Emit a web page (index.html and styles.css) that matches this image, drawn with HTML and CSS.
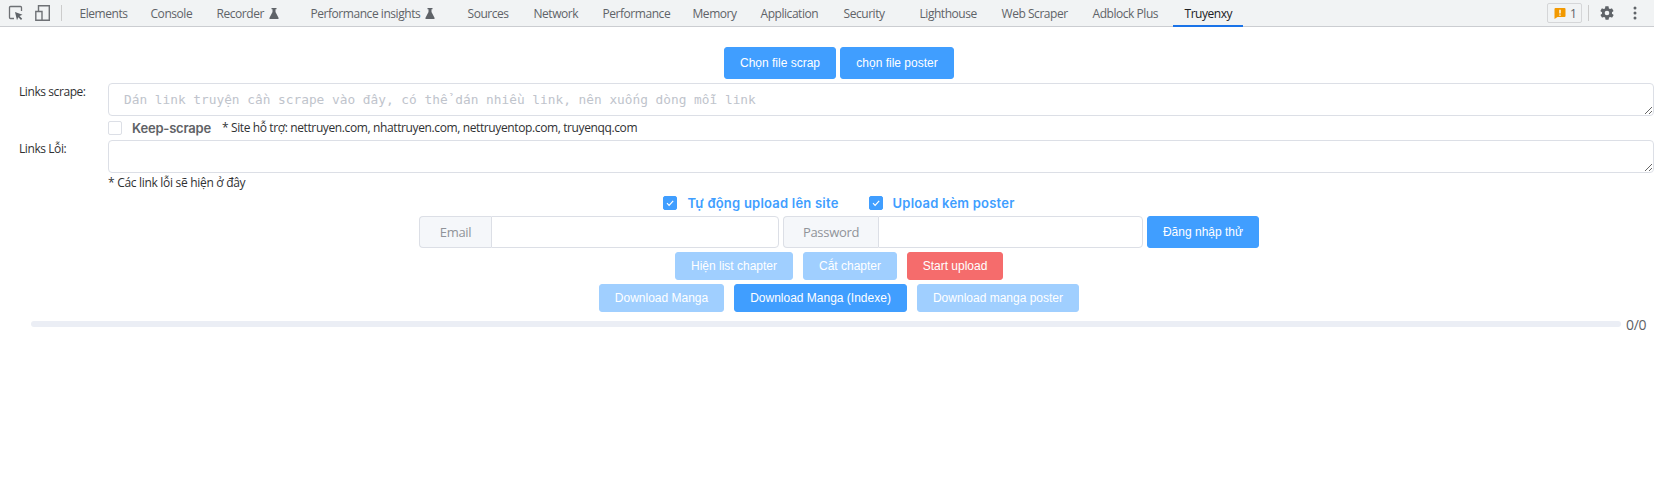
FILE: index.html
```html
<!DOCTYPE html>
<html lang="vi">
<head>
<meta charset="utf-8">
<title>Truyenxy</title>
<link rel="stylesheet" href="styles.css">
</head>
<body>
<header class="toolbar">
  <div class="tool-icons">
    <svg class="tool-icon" width="16" height="16" viewBox="0 0 16 16"><path d="M6 13.500H2.500a1 1 0 0 1-1-1V2.500a1 1 0 0 1 1-1h10a1 1 0 0 1 1 1V6" fill="none" stroke="#6e7175" stroke-width="1.300"/><path d="M7 7l7.500 2.700-3 1.300 2.700 2.800-1.200 1.200-2.700-2.800-1.300 3z" fill="#5f6368"/></svg>
    <svg class="tool-icon device" width="16" height="16" viewBox="0 0 16 16"><path d="M3.500 6V.8h10.800v14.400H7" fill="none" stroke="#6e7175" stroke-width="1.400"/><path d="M.8 6.500h6.200v8.700H.8z" fill="none" stroke="#6e7175" stroke-width="1.400"/></svg>
  </div>
  <span class="divider"></span>
  <nav class="tabs">
    <span class="tab">Elements</span>
    <span class="tab">Console</span>
    <span class="tab">Recorder<svg class="flask" width="10" height="11" viewBox="0 0 10 11"><path d="M2.500 0h5v1.200H6.500v2.800L9.500 9.800V11H.5V9.800L3.500 4V1.200h-1z" fill="#5f6368"/></svg></span>
    <span class="tab">Performance insights<svg class="flask" width="10" height="11" viewBox="0 0 10 11"><path d="M2.500 0h5v1.200H6.500v2.800L9.500 9.800V11H.5V9.800L3.500 4V1.200h-1z" fill="#5f6368"/></svg></span>
    <span class="tab">Sources</span>
    <span class="tab">Network</span>
    <span class="tab">Performance</span>
    <span class="tab">Memory</span>
    <span class="tab">Application</span>
    <span class="tab">Security</span>
    <span class="tab">Lighthouse</span>
    <span class="tab">Web Scraper</span>
    <span class="tab">Adblock Plus</span>
    <span class="tab active">Truyenxy</span>
  </nav>
  <div class="tool-right">
    <span class="issues"><svg width="12" height="12" viewBox="0 0 12 12"><path d="M1.500 1h9a1 1 0 0 1 1 1v7a1 1 0 0 1-1 1H3.500L.5 12V2a1 1 0 0 1 1-1z" fill="#f29900"/><path d="M5.300 2.800h1.400v3.800H5.300zM5.300 7.400h1.400v1.400H5.300z" fill="#fff"/></svg>1</span>
    <span class="divider"></span>
    <svg class="gear" width="16" height="16" viewBox="0 0 24 24"><path fill-rule="evenodd" d="M19.400 13c.1-.3.100-.7.100-1s0-.7-.1-1l2.100-1.600c.2-.2.200-.4.100-.6l-2-3.500c-.1-.2-.4-.3-.6-.2l-2.500 1c-.5-.4-1.100-.7-1.700-1l-.4-2.600c0-.3-.2-.5-.5-.5h-4c-.3 0-.5.200-.5.500l-.4 2.600c-.6.300-1.200.6-1.700 1l-2.500-1c-.2-.1-.5 0-.6.200l-2 3.500c-.1.200-.1.500.1.600L4.600 11c-.1.300-.1.700-.1 1s0 .7.100 1l-2.100 1.600c-.2.200-.2.400-.1.600l2 3.500c.1.200.4.300.6.200l2.500-1c.5.400 1.100.7 1.700 1l.4 2.600c0 .3.200.5.500.5h4c.3 0 .5-.2.500-.5l.4-2.600c.6-.3 1.200-.6 1.700-1l2.500 1c.2.100.5 0 .6-.2l2-3.500c.1-.2.100-.5-.1-.6zM12 15.500a3.500 3.500 0 1 1 0-7 3.500 3.500 0 0 1 0 7z" fill="#5f6368"/></svg>
    <svg class="dots" width="4" height="14" viewBox="0 0 4 14"><circle cx="2" cy="2" r="1.500" fill="#5f6368"/><circle cx="2" cy="7" r="1.500" fill="#5f6368"/><circle cx="2" cy="12" r="1.500" fill="#5f6368"/></svg>
  </div>
</header>

<main class="page">
  <div class="center-row row-files">
    <button class="btn btn-file">Chọn file scrap</button>
    <button class="btn btn-file-2">chọn file poster</button>
  </div>

  <div class="form-row row-scrape">
    <label class="field-label">Links scrape:</label>
    <textarea class="area" placeholder="Dán link truyện cần scrape vào đây, có thể dán nhiều link, nên xuống dòng mỗi link"></textarea>
  </div>
  <div class="note-row">
    <span class="check"></span>
    <span class="keep">Keep-scrape</span>
    <span class="note">* Site hỗ trợ: nettruyen.com, nhattruyen.com, nettruyentop.com, truyenqq.com</span>
  </div>
  <div class="form-row row-error">
    <label class="field-label">Links Lỗi:</label>
    <textarea class="area"></textarea>
  </div>
  <div class="note-row note-below">
    <span class="note">* Các link lỗi sẽ hiện ở đây</span>
  </div>

  <div class="center-row row-checks">
    <span class="check checked"><svg width="10" height="10" viewBox="0 0 10 10"><path d="M2 5.200l2.100 2.100L8.200 2.800" fill="none" stroke="#fff" stroke-width="1.200"/></svg></span>
    <span class="check-label">Tự động upload lên site</span>
    <span class="check checked second"><svg width="10" height="10" viewBox="0 0 10 10"><path d="M2 5.200l2.100 2.100L8.200 2.800" fill="none" stroke="#fff" stroke-width="1.200"/></svg></span>
    <span class="check-label">Upload kèm poster</span>
  </div>

  <div class="center-row row-login">
    <div class="input-group">
      <span class="addon addon-email">Email</span>
      <input class="input" type="text">
    </div>
    <div class="input-group">
      <span class="addon addon-pass">Password</span>
      <input class="input" type="password">
    </div>
    <button class="btn btn-login">Đăng nhập thử</button>
  </div>

  <div class="center-row row-actions">
    <button class="btn small disabled btn-list">Hiện list chapter</button>
    <button class="btn small disabled btn-cut">Cắt chapter</button>
    <button class="btn small danger btn-start">Start upload</button>
  </div>

  <div class="center-row row-downloads">
    <button class="btn small disabled btn-dl">Download Manga</button>
    <button class="btn small btn-dl-index">Download Manga (Indexe)</button>
    <button class="btn small disabled btn-dl-poster">Download manga poster</button>
  </div>

  <div class="progress">
    <div class="progress-track"></div>
    <span class="progress-text">0/0</span>
  </div>
</main>
</body>
</html>
```

FILE: styles.css
```css
* { box-sizing: border-box; }

html, body { margin: 0; padding: 0; }

body {
  width: 1654px;
  height: 480px;
  overflow: hidden;
  background: #fff;
  font-family: "Open Sans", "Noto Sans", sans-serif;
}

/* DevTools toolbar */
.toolbar {
  display: flex;
  align-items: center;
  height: 27px;
  background: #f1f3f4;
  border-bottom: 1px solid #cbcdd1;
  color: #5f6368;
  font-size: 12px;
}

.tool-icons { display: flex; align-items: center; padding-left: 8px; }
.tool-icon.device { margin-left: 11px; }

.divider {
  width: 1px;
  height: 16px;
  background: #ccc;
}
.toolbar > .divider { margin-left: 10px; margin-right: 6px; }

.tabs { display: flex; height: 26px; }

.tab {
  display: flex;
  flex: none;
  align-items: center;
  padding-left: 11.5px;
  letter-spacing: -0.45px;
  white-space: nowrap;
  color: #5f6368;
}
.tab:nth-child(1) { width: 71px; }
.tab:nth-child(2) { width: 66px; }
.tab:nth-child(3) { width: 94px; }
.tab:nth-child(4) { width: 157px; }
.tab:nth-child(5) { width: 66px; }
.tab:nth-child(6) { width: 69px; }
.tab:nth-child(7) { width: 90px; }
.tab:nth-child(8) { width: 68px; }
.tab:nth-child(9) { width: 83px; }
.tab:nth-child(10) { width: 76px; }
.tab:nth-child(11) { width: 82px; }
.tab:nth-child(12) { width: 91px; }
.tab:nth-child(13) { width: 92px; }
.tab:nth-child(14) { width: 70px; }

.flask { margin-left: 5px; }

.tab.active {
  height: 27px;
  padding-bottom: 1px;
  color: #202124;
  box-shadow: inset 0 -2px 0 #1a73e8;
}

.tool-right {
  display: flex;
  align-items: center;
  margin-left: auto;
}

.issues {
  display: flex;
  align-items: center;
  gap: 4px;
  width: 35px;
  height: 20px;
  padding-left: 6px;
  border: 1px solid #d5d6d8;
  border-radius: 2px;
  color: #5f6368;
}
.tool-right .divider { margin: 0 10px 0 6px; }
.gear { margin-right: 18px; }
.dots { margin-right: 17px; }

/* Page */
.page { display: flex; flex-direction: column; }

.center-row {
  display: flex;
  justify-content: center;
  padding-left: 24px;
}

.row-files { gap: 4px; margin-top: 20px; }

.btn {
  height: 32px;
  padding: 0;
  border: 1px solid #409eff;
  border-radius: 3px;
  background: #409eff;
  color: #fff;
  font-family: "Liberation Sans", Arial, sans-serif;
  font-size: 12px;
  white-space: nowrap;
}
.btn.small { height: 28px; }
.btn.disabled { background: #a0cfff; border-color: #a0cfff; }
.btn.danger { background: #f56c6c; border-color: #f56c6c; }

.btn-file { width: 112px; }
.btn-file-2 { width: 114px; }
.btn-login { width: 112px; }
.btn-list { width: 118px; }
.btn-cut { width: 94px; }
.btn-start { width: 96px; }
.btn-dl { width: 125px; }
.btn-dl-index { width: 173px; }
.btn-dl-poster { width: 162px; }

.form-row { display: flex; padding-left: 19px; }
.row-scrape { margin-top: 4px; }
.row-error { margin-top: 3px; }

.field-label {
  flex: 0 0 89px;
  font-size: 12px;
  line-height: 17px;
  letter-spacing: -0.42px;
  color: #303133;
}

.area {
  flex: 1;
  height: 33px;
  min-width: 0;
  padding: 5px 15px;
  border: 1px solid #dcdfe6;
  border-radius: 4px;
  outline: none;
  background: #fff;
  font-family: "DejaVu Sans Mono", "Liberation Mono", monospace;
  font-size: 12.8px;
  line-height: 21px;
}
.area::placeholder { color: #c0c4cc; opacity: 1; }

.note-row {
  display: flex;
  align-items: center;
  height: 19px;
  margin-top: 2px;
  padding-left: 108px;
}
.note-below { height: 16px; margin-top: 1px; }
.note-below .note { letter-spacing: -0.3px; }

.check {
  display: flex;
  align-items: center;
  justify-content: center;
  width: 14px;
  height: 14px;
  border: 1px solid #dcdfe6;
  border-radius: 2px;
  background: #fff;
}
.check.checked { background: #409eff; border-color: #409eff; }
.check.second { margin-left: 30px; }

.keep {
  flex: 0 0 78px;
  margin-left: 10px;
  font-family: Inter, "Liberation Sans", sans-serif;
  font-size: 13px;
  font-weight: 600;
  white-space: nowrap;
  letter-spacing: -0.2px;
  color: #606266;
}

.note {
  font-size: 12px;
  letter-spacing: -0.38px;
  color: #303133;
}
.keep + .note { margin-left: 11px; }

.row-checks {
  align-items: center;
  height: 20px;
  margin-top: 3px;
}

.check-label {
  margin-left: 10px;
  font-family: Inter, "Liberation Sans", sans-serif;
  font-size: 13px;
  font-weight: 600;
  letter-spacing: 0.22px;
  color: #409eff;
}

.row-login { gap: 4px; margin-top: 3px; }
.input-group { display: flex; width: 360px; height: 32px; }

.addon {
  display: flex;
  align-items: center;
  justify-content: center;
  border: 1px solid #dcdfe6;
  border-right: 0;
  border-radius: 4px 0 0 4px;
  background: #f5f7fa;
  color: #909399;
  font-size: 13px;
  letter-spacing: -0.3px;
}
.addon-email { flex: 0 0 72px; }
.addon-pass { flex: 0 0 95px; }

.input {
  flex: 1;
  min-width: 0;
  border: 1px solid #dcdfe6;
  border-radius: 0 4px 4px 0;
  outline: none;
}

.row-actions { gap: 10px; margin-top: 4px; }
.row-downloads { gap: 10px; margin-top: 4px; }

.progress {
  display: flex;
  align-items: center;
  height: 16px;
  margin-top: 4px;
  padding: 0 7px 0 31px;
}
.progress-track {
  flex: 1;
  height: 6px;
  border-radius: 3px;
  background: #ebeef5;
}
.progress-text {
  flex: 0 0 21px;
  margin-left: 5px;
  padding-top: 1px;
  font-size: 14px;
  letter-spacing: -0.3px;
  color: #606266;
}
```
